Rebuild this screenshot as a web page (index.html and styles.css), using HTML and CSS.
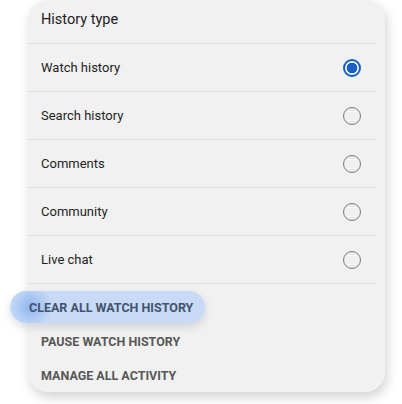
FILE: index.html
```html
<!DOCTYPE html>
<html>
<head>
<meta charset="utf-8">
<link rel="stylesheet" href="styles.css">
</head>
<body>
<div class="card">
  <div class="header">History type</div>
  <div class="row"><span class="label">Watch history</span><span class="radio checked"></span></div>
  <div class="row"><span class="label">Search history</span><span class="radio"></span></div>
  <div class="row"><span class="label">Comments</span><span class="radio"></span></div>
  <div class="row"><span class="label">Community</span><span class="radio"></span></div>
  <div class="row"><span class="label">Live chat</span><span class="radio"></span></div>
  <div class="actions">
    <div class="action active">CLEAR ALL WATCH HISTORY</div>
    <div class="action">PAUSE WATCH HISTORY</div>
    <div class="action">MANAGE ALL ACTIVITY</div>
  </div>
</div>
</body>
</html>
```
FILE: styles.css
```css
html, body {
  margin: 0;
  padding: 0;
  background: #ffffff;
}
body {
  width: 402px;
  height: 404px;
  overflow: hidden;
  font-family: Roboto, "Liberation Sans", Arial, sans-serif;
}
.card {
  margin-left: 28px;
  margin-top: 0;
  width: 357px;
  height: 392px;
  box-sizing: border-box;
  background: #f1f1f1;
  border-radius: 20px;
  box-shadow: 2px 5px 12px rgba(0, 0, 0, 0.18);
  display: flex;
  flex-direction: column;
}
.header {
  height: 43px;
  box-sizing: border-box;
  padding-left: 13px;
  display: flex;
  align-items: center;
  font-size: 14.5px;
  color: #222;
  padding-bottom: 4px;
}
.row {
  height: 48px;
  box-sizing: border-box;
  border-top: 1px solid #dfdfdf;
  margin-right: 9px;
  padding-left: 13px;
  padding-right: 15px;
  display: flex;
  align-items: center;
  justify-content: space-between;
  font-size: 13px;
  color: #1f1f1f;
}
.radio {
  width: 18px;
  height: 18px;
  box-sizing: border-box;
  border-radius: 50%;
  border: 1.6px solid #7a7a7a;
}
.radio.checked {
  border: 2px solid #1a5fc4;
  background: radial-gradient(circle, #1a5fc4 0 5px, transparent 5.6px);
}
.actions {
  border-top: 1px solid #dfdfdf;
  margin-right: 9px;
  padding-top: 7px;
  display: flex;
  flex-direction: column;
}
.action {
  height: 34px;
  padding-left: 13px;
  display: flex;
  align-items: center;
  font-size: 12.5px;
  font-weight: 700;
  color: #575757;
}
.action.active {
  align-self: flex-start;
  height: 32px;
  margin-left: -18px;
  padding-left: 19px;
  padding-right: 12px;
  border-radius: 16px;
  color: #43536e;
  background:
    radial-gradient(circle at 20px 50%, rgba(125, 170, 240, 0.75) 0, rgba(125, 170, 240, 0) 22px),
    rgba(185, 210, 245, 0.75);
  box-shadow: 0 4px 8px rgba(60, 80, 120, 0.18);
  margin-bottom: 1px;
}
```
